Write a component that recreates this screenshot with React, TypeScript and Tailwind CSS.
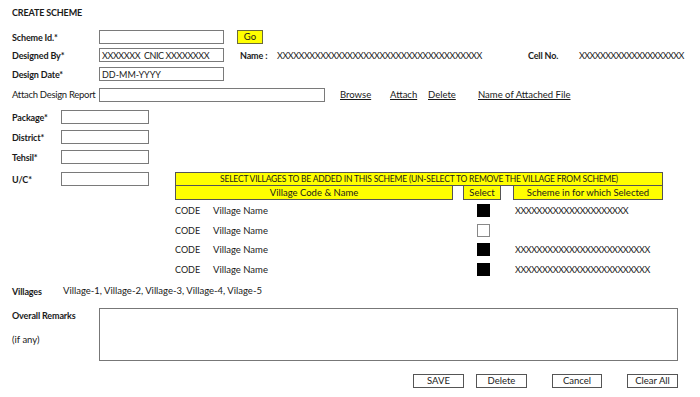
const villageRows = [
  { code: 'CODE', name: 'Village Name', checked: true, scheme: 'XXXXXXXXXXXXXXXXXXXXX' },
  { code: 'CODE', name: 'Village Name', checked: false, scheme: '' },
  { code: 'CODE', name: 'Village Name', checked: true, scheme: 'XXXXXXXXXXXXXXXXXXXXXXXXX' },
  { code: 'CODE', name: 'Village Name', checked: true, scheme: 'XXXXXXXXXXXXXXXXXXXXXXXXX' },
]

// bold labels in the form
const lb = 'shrink-0 font-bold text-[9px] tracking-[-0.15px] '

const Box = ({ className, children }: { className: string; children?: React.ReactNode }) => (
  <div className={'shrink-0 h-[14px] border border-[#7a7a7a] bg-white flex items-center px-[2px] whitespace-nowrap overflow-hidden ' + className}>{children}</div>
)

const App = () => {
  return (
    <div className="w-[700px] h-[397px] overflow-hidden bg-white pl-[12px] pt-[6px] font-['Lato',sans-serif] text-[9.5px] leading-none text-[#1a1a1a] whitespace-nowrap">
      <div className={lb + 'h-[12px] flex items-center'}>CREATE SCHEME</div>

      {/* scheme id */}
      <div className="mt-[12px] flex items-center h-[14px]">
        <span className={lb + 'w-[87px]'}>Scheme Id.*</span>
        <Box className="w-[125px]" />
        <div className="shrink-0 ml-[13px] w-[26px] h-[14px] bg-[#ffff00] border border-[#6b6b3a] flex items-center justify-center">Go</div>
      </div>

      {/* designed by */}
      <div className="mt-[4px] flex items-center h-[14px]">
        <span className={lb + 'w-[87px]'}>Designed By*</span>
        <Box className="w-[125px] text-[9px] tracking-[-0.4px]">XXXXXXX&nbsp; CNIC XXXXXXXX</Box>
        <span className={lb + 'ml-[16px] w-[37px]'}>Name :</span>
        <span className="shrink-0 w-[251px] text-[9px] tracking-[-0.45px]">XXXXXXXXXXXXXXXXXXXXXXXXXXXXXXXXXXXXXX</span>
        <span className={lb + 'w-[51px]'}>Cell No.</span>
        <span className="shrink-0 text-[9px] tracking-[-0.6px]">XXXXXXXXXXXXXXXXXXXX</span>
      </div>

      {/* design date */}
      <div className="mt-[5px] flex items-center h-[14px]">
        <span className={lb + 'w-[87px]'}>Design Date*</span>
        <Box className="w-[125px] text-[9px]">DD-MM-YYYY</Box>
      </div>

      {/* attach */}
      <div className="mt-[7px] flex items-center h-[14px]">
        <span className="shrink-0 w-[87px] tracking-[-0.3px]">Attach Design Report</span>
        <Box className="w-[226px]" />
        <span className="shrink-0 ml-[15px] w-[50px] underline">Browse</span>
        <span className="shrink-0 w-[38px] underline">Attach</span>
        <span className="shrink-0 w-[50px] underline">Delete</span>
        <span className="shrink-0 underline">Name of Attached File</span>
      </div>

      <div className="mt-[8px] flex items-center h-[14px]">
        <span className={lb + 'w-[49px]'}>Package*</span>
        <Box className="w-[88px]" />
      </div>
      <div className="mt-[6px] flex items-center h-[14px]">
        <span className={lb + 'w-[49px]'}>District*</span>
        <Box className="w-[88px]" />
      </div>
      <div className="mt-[6px] flex items-center h-[14px]">
        <span className={lb + 'w-[49px]'}>Tehsil*</span>
        <Box className="w-[88px]" />
      </div>

      {/* U/C + villages table */}
      <div className="mt-[8px] flex items-start">
        <div className="shrink-0 flex items-center h-[14px]">
          <span className={lb + 'w-[49px]'}>U/C*</span>
          <Box className="w-[88px]" />
        </div>
        <div className="shrink-0 ml-[26px] w-[488px]">
          <div className="h-[14px] bg-[#ffff00] border border-[#555] flex items-center justify-center text-[8.5px] tracking-[-0.2px]">
            SELECT VILLAGES TO BE ADDED IN THIS SCHEME (UN-SELECT TO REMOVE THE VILLAGE FROM SCHEME)
          </div>
          <div className="flex h-[14px]">
            <div className="shrink-0 w-[278px] bg-[#ffff00] border border-t-0 border-[#555] flex items-center justify-center">Village Code &amp; Name</div>
            <div className="shrink-0 ml-[10px] w-[38px] bg-[#ffff00] border border-t-0 border-[#555] flex items-center justify-center">Select</div>
            <div className="shrink-0 ml-[12px] w-[150px] bg-[#ffff00] border border-t-0 border-[#555] flex items-center justify-center">Scheme in for which Selected</div>
          </div>
          <div className="mt-[1px]">
            {villageRows.map((r, i) => (
              <div key={i} className="h-[19.5px] flex items-center">
                <span className="shrink-0 w-[38px] text-[9px]">{r.code}</span>
                <span className="shrink-0 w-[264px]">{r.name}</span>
                <span className={'shrink-0 w-[13px] h-[13px] ' + (r.checked ? 'bg-black' : 'bg-white border border-[#888]')} />
                <span className="shrink-0 ml-[25px] text-[9px] tracking-[-0.45px]">{r.scheme}</span>
              </div>
            ))}
          </div>
        </div>
      </div>

      {/* villages */}
      <div className="mt-[6px] h-[12px] flex items-center">
        <span className={lb + 'w-[51px]'}>Villages</span>
        <span>Village-1, Village-2, Village-3, Village-4, Vilage-5</span>
      </div>

      {/* remarks */}
      <div className="mt-[11px] flex">
        <div className="shrink-0 w-[87px] h-[53px] flex flex-col">
          <span className={lb + 'mt-[3px]'}>Overall Remarks</span>
          <span className="mt-[15px]">(if any)</span>
        </div>
        <div className="shrink-0 w-[579px] h-[53px] border border-[#777]" />
      </div>

      {/* actions */}
      <div className="mt-[13px] flex h-[14px] pl-[401px]">
        <button className="shrink-0 w-[51px] h-[14px] border border-[#555] flex items-center justify-center">SAVE</button>
        <button className="shrink-0 ml-[12px] w-[51px] h-[14px] border border-[#555] flex items-center justify-center">Delete</button>
        <button className="shrink-0 ml-[25px] w-[50px] h-[14px] border border-[#555] flex items-center justify-center">Cancel</button>
        <button className="shrink-0 ml-[25px] w-[51px] h-[14px] border border-[#555] flex items-center justify-center">Clear All</button>
      </div>
    </div>
  )
}

export default App
